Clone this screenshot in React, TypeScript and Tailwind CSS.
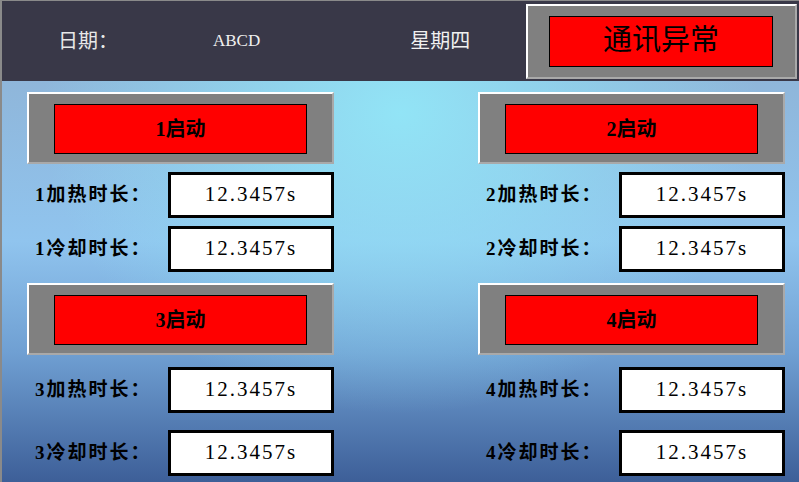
import React from "react";

const serif = "font-['Liberation_Serif','Noto_Sans_CJK_SC',serif]";

function StartButton({ label }: { label: string }) {
  return (
    <div className="flex h-[72px] w-full items-start border-t-2 border-l-2 border-b-2 border-r-2 border-t-white border-l-white border-b-[#a9a9a9] border-r-[#a9a9a9] bg-[#808080] pl-[25px] pt-[10px]">
      <div className={`flex h-[50px] w-[253px] items-center justify-center border border-black bg-[#ff0000] text-[20px] font-semibold text-black ${serif}`}>
        {label}
      </div>
    </div>
  );
}

function ValueRow({ label, mt }: { label: string; mt: string }) {
  return (
    <div className={`flex items-center ${mt}`}>
      <div className={`flex-1 pl-2 text-[19px] font-semibold tracking-[2px] text-black ${serif}`}>{label}</div>
      <div className={`flex h-[46px] w-[166px] items-center justify-center border-[3px] border-black bg-white text-[21px] tracking-[2px] text-black ${serif}`}>
        12.3457s
      </div>
    </div>
  );
}

function Column({ n }: { n: [number, number] }) {
  return (
    <div className="flex w-[307px] flex-col">
      <StartButton label={`${n[0]}启动`} />
      <ValueRow label={`${n[0]}加热时长：`} mt="mt-[8px]" />
      <ValueRow label={`${n[0]}冷却时长：`} mt="mt-[8px]" />
      <div className="mt-[11px]">
        <StartButton label={`${n[1]}启动`} />
      </div>
      <ValueRow label={`${n[1]}加热时长：`} mt="mt-[12px]" />
      <ValueRow label={`${n[1]}冷却时长：`} mt="mt-[17px]" />
    </div>
  );
}

export default function App() {
  return (
    <div className="flex h-[482px] w-[799px] flex-col overflow-hidden border-t border-l-2 border-[#8a8a8a]">
      <div className="flex h-[80px] items-center bg-[#393848]">
        <div className={`ml-[56px] text-[20px] text-[#e8e8e8] ${serif}`}>日期：</div>
        <div className={`ml-[95px] text-[17px] text-[#f0f0f0] ${serif}`}>ABCD</div>
        <div className={`ml-[150px] text-[20px] text-[#f0f0f0] ${serif}`}>星期四</div>
        <div className="ml-auto mr-[2px] flex h-[75px] w-[271px] items-center border-t-2 border-l-2 border-b-2 border-r-2 border-t-white border-l-white border-b-[#a9a9a9] border-r-[#a9a9a9] bg-[#808080] pl-[21px]">
          <div className={`flex h-[51px] w-[224px] items-center justify-center border border-black bg-[#ff0000] text-[29px] text-black ${serif}`}>
            通讯异常
          </div>
        </div>
      </div>
      <div className="flex flex-1 justify-between pl-[25px] pr-[14px] pt-[11px] [background-image:radial-gradient(ellipse_45%_75%_at_50%_8%,rgba(146,228,246,1),rgba(146,228,246,0)),linear-gradient(to_bottom,#8fb6da_0%,#90c4ee_40%,#6f9fd2_68%,#3d5f98_100%)]">
        <Column n={[1, 3]} />
        <Column n={[2, 4]} />
      </div>
    </div>
  );
}
